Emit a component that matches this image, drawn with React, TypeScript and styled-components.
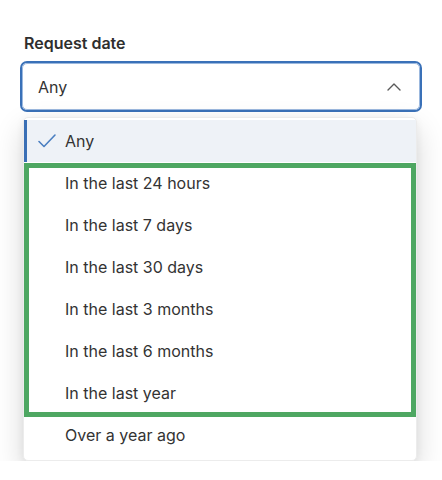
import React from "react";
import styled, { createGlobalStyle } from "styled-components";

const GlobalStyle = createGlobalStyle`
  body {
    margin: 0;
    background: #ffffff;
    font-family: Inter, "Noto Sans", "Liberation Sans", sans-serif;
    color: #333333;
  }
`;

const Page = styled.div`
  padding: 33px 20px 0 20px;
  width: 402px;
`;

const Label = styled.div`
  font-size: 16px;
  font-weight: 600;
  line-height: 20px;
  color: #2e2e2e;
  padding-left: 4px;
  margin-bottom: 10px;
`;

const SelectBox = styled.div`
  margin: 0 2px;
  height: 47px;
  box-sizing: border-box;
  border: 1px solid #9bb8de;
  border-radius: 5px;
  box-shadow: 0 0 0 2px #3a71b8;
  display: flex;
  align-items: center;
  justify-content: space-between;
  padding: 0 18px 0 15px;
  font-size: 16px;
  color: #333333;
`;

const Menu = styled.div`
  margin: 7px 5px 0 3px;
  padding: 2px 0 4px 0;
  background: #ffffff;
  border-radius: 5px;
  border: 1px solid #ececec;
  box-shadow: 0 12px 30px rgba(0, 0, 0, 0.16), 0 2px 8px rgba(0, 0, 0, 0.06);
`;

const Option = styled.div<{ $selected?: boolean }>`
  height: 42px;
  display: flex;
  align-items: center;
  font-size: 16px;
  color: #333333;
  box-sizing: border-box;
  padding-left: ${(p) => (p.$selected ? "10px" : "41px")};
  background: ${(p) => (p.$selected ? "#eef2f7" : "transparent")};
  border-left: ${(p) => (p.$selected ? "3px solid #3a6fb5" : "none")};
`;

const CheckWrap = styled.span`
  display: inline-flex;
  width: 28px;
`;

const Highlight = styled.div`
  position: relative;

  &::after {
    content: "";
    position: absolute;
    left: 0;
    right: 0;
    top: 1px;
    bottom: -3px;
    border: 5px solid #4ea762;
    pointer-events: none;
  }
`;

const Check = () => (
  <svg width="20" height="16" viewBox="0 0 20 16" fill="none">
    <path
      d="M2 8.5 L7 13.5 L18 2"
      stroke="#4a7fc1"
      strokeWidth="1.6"
      strokeLinecap="round"
      strokeLinejoin="round"
    />
  </svg>
);

const Chevron = () => (
  <svg width="14" height="8" viewBox="0 0 14 8" fill="none">
    <path
      d="M1 7 L7 1 L13 7"
      stroke="#5a5a5a"
      strokeWidth="1.4"
      strokeLinecap="round"
      strokeLinejoin="round"
    />
  </svg>
);

const highlighted = [
  "In the last 24 hours",
  "In the last 7 days",
  "In the last 30 days",
  "In the last 3 months",
  "In the last 6 months",
  "In the last year",
];

export default function App() {
  return (
    <>
      <GlobalStyle />
      <Page>
        <Label>Request date</Label>
        <SelectBox>
          <span>Any</span>
          <Chevron />
        </SelectBox>
        <Menu>
          <Option $selected>
            <CheckWrap>
              <Check />
            </CheckWrap>
            Any
          </Option>
          <Highlight>
            {highlighted.map((o) => (
              <Option key={o}>{o}</Option>
            ))}
          </Highlight>
          <Option>Over a year ago</Option>
        </Menu>
      </Page>
    </>
  );
}
